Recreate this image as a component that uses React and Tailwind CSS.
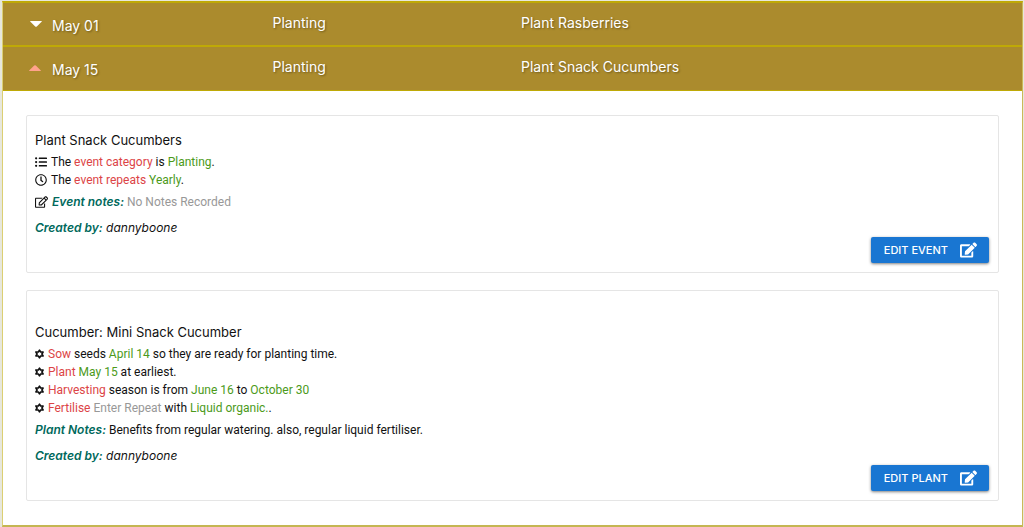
import React from "react";
import { FaEdit, FaListUl, FaRegClock, FaRegEdit } from "react-icons/fa";

const Red = ({ children }) => <span className="text-[#dc4446]">{children}</span>;
const Green = ({ children }) => <span className="text-[#4c9a1a]">{children}</span>;
const Muted = ({ children }) => <span className="text-[#989898]">{children}</span>;
const Label = ({ children }) => (
  <span className="font-['Inter','Liberation_Sans',sans-serif] font-semibold text-[#00695c] italic">{children}</span>
);

function StarIcon() {
  return (
    <svg viewBox="0 0 18 20" className="mb-px h-[10px] w-[9px] shrink-0" fill="none" stroke="currentColor" strokeWidth="3.2" strokeLinejoin="round" aria-hidden="true">
      <path d="M9 2.2 11.3 6H16.2L13.8 10 16.2 14H11.3L9 17.8 6.7 14H1.8L4.2 10 1.8 6H6.7Z" />
    </svg>
  );
}

function Caret({ up }) {
  return (
    <svg viewBox="0 0 12 6" className={up ? "mt-[5px] mr-px ml-[5px] h-1.5 w-3 text-[#ffa38c]" : "mt-[5px] ml-1.5 h-1.5 w-3"} fill="currentColor" aria-hidden="true">
      {up ? (
        <path d="M.6 6Q-.2 6 .4 5.2L5.2.5Q6 -.2 6.8.5L11.6 5.2Q12.2 6 11.4 6Z" />
      ) : (
        <path d="M.6 0Q-.2 0 .4.8L5.2 5.5Q6 6.2 6.8 5.5L11.6.8Q12.2 0 11.4 0Z" />
      )}
    </svg>
  );
}

function EventRow({ date, category, title, open }) {
  return (
    <h2>
      <button
        type="button"
        aria-expanded={open}
        className={`grid h-[44px] w-full grid-cols-[1fr_1fr_2fr] border-[#bfa906] pr-1 pl-[21px] text-left text-[14px] leading-5 text-white [text-shadow:1px_1px_2px_rgb(0_0_0/0.35)] ${open ? "border-b" : "border-b-2"}`}
      >
        <span className="flex items-start pt-[13px]">
          <Caret up={open} />
          <span className="ml-2.5">{date}</span>
        </span>
        <span className="pt-2.5">{category}</span>
        <span className="pt-2.5">{title}</span>
      </button>
    </h2>
  );
}

function EditButton({ children }) {
  return (
    <button
      type="button"
      className="flex h-[26px] items-center gap-3 self-end rounded-xs bg-[#1976d2] pr-3 pl-[13px] font-['Inter','Liberation_Sans',sans-serif] text-[11px] font-medium text-white uppercase shadow-[0_1px_3px_rgb(0_0_0/0.5)]"
    >
      {children}
      <FaEdit className="h-4 w-[17px]" />
    </button>
  );
}

function CardTitle({ children }) {
  return (
    <h3 className="mb-[3px] font-['Inter','Liberation_Sans',sans-serif] text-[13px] leading-5">{children}</h3>
  );
}

function Author() {
  return (
    <p className="mt-2 font-['Inter','Liberation_Sans',sans-serif] italic">
      <Label>Created by:</Label> dannyboone
    </p>
  );
}

export default function App() {
  return (
    <main className="bg-[#e7e7dc] pt-px pr-px pl-[2px] text-[#111]">
      <section className="border-x border-y-2 border-t-[#bfa906] border-r-[#cbb958] border-b-[#c4b652] border-l-[#dbcf72] bg-white">
        <div className="bg-[#ab8b2d] font-['Inter','Liberation_Sans',sans-serif]">
          <EventRow date="May 01" category="Planting" title="Plant Rasberries" open={false} />
          <EventRow date="May 15" category="Planting" title="Plant Snack Cucumbers" open />
        </div>
        <div className="flex flex-col gap-[17px] px-[23px] py-6 font-['Roboto','Liberation_Sans',sans-serif] text-[12px] leading-[18px]">
          <article className="flex flex-col rounded-xs border border-[#e5e5e5] pt-3.5 pr-[9px] pb-[9px] pl-2">
            <CardTitle>Plant Snack Cucumbers</CardTitle>
            <p className="flex items-center gap-1">
              <FaListUl className="h-3 w-3" />
              <span>The <Red>event category</Red> is <Green>Planting</Green>.</span>
            </p>
            <p className="flex items-center gap-1">
              <FaRegClock className="h-3 w-3" />
              <span>The <Red>event repeats</Red> <Green>Yearly</Green>.</span>
            </p>
            <p className="mt-1 flex items-center gap-1">
              <FaRegEdit className="h-3 w-[13px]" />
              <span><Label>Event notes:</Label> <Muted>No Notes Recorded</Muted></span>
            </p>
            <Author />
            <EditButton>Edit event</EditButton>
          </article>
          <article className="flex flex-col rounded-xs border border-[#e5e5e5] pt-[31px] pr-[9px] pb-[9px] pl-2">
            <CardTitle>Cucumber: Mini Snack Cucumber</CardTitle>
            <ul>
              <li className="flex items-center gap-1">
                <StarIcon />
                <span><Red>Sow</Red> seeds <Green>April 14</Green> so they are ready for planting time.</span>
              </li>
              <li className="flex items-center gap-1">
                <StarIcon />
                <span><Red>Plant</Red> <Green>May 15</Green> at earliest.</span>
              </li>
              <li className="flex items-center gap-1">
                <StarIcon />
                <span><Red>Harvesting</Red> season is from <Green>June 16</Green> to <Green>October 30</Green></span>
              </li>
              <li className="flex items-center gap-1">
                <StarIcon />
                <span><Red>Fertilise</Red> <Muted>Enter Repeat</Muted> with <Green>Liquid organic.</Green>.</span>
              </li>
            </ul>
            <p className="mt-1">
              <Label>Plant Notes:</Label> Benefits from regular watering. also, regular liquid fertiliser.
            </p>
            <Author />
            <EditButton>Edit plant</EditButton>
          </article>
        </div>
      </section>
    </main>
  );
}
